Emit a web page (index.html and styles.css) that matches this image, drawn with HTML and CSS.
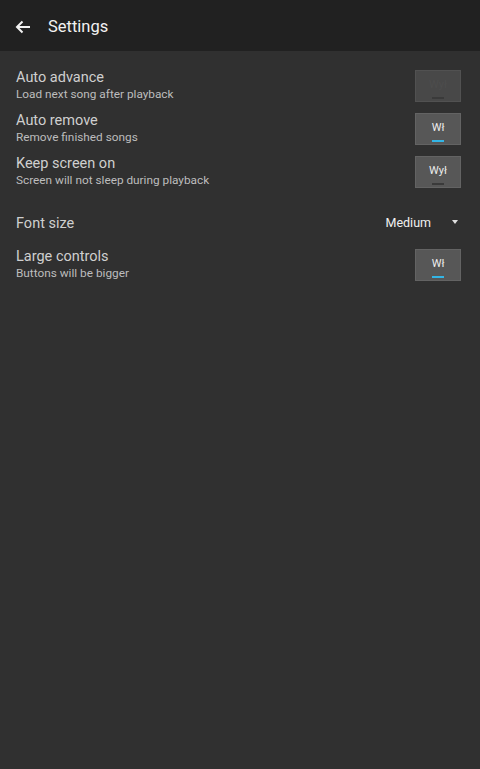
FILE: index.html
```html
<!DOCTYPE html>
<html>
<head>
<meta charset="utf-8">
<link rel="stylesheet" href="styles.css">
</head>
<body>
<header class="appbar">
  <svg class="back" width="16" height="14" viewBox="0 0 16 14"><path d="M15 7H2.5M7.5 1.5L2 7l5.5 5.5" fill="none" stroke="#f2f2f2" stroke-width="2"/></svg>
  <span class="title">Settings</span>
</header>
<main class="list">
  <div class="row">
    <div class="texts"><div class="t">Auto advance</div><div class="s">Load next song after playback</div></div>
    <div class="toggle disabled"><span class="lbl">Wył</span><span class="bar"></span></div>
  </div>
  <div class="row">
    <div class="texts"><div class="t">Auto remove</div><div class="s">Remove finished songs</div></div>
    <div class="toggle on"><span class="lbl">Wł</span><span class="bar"></span></div>
  </div>
  <div class="row">
    <div class="texts"><div class="t">Keep screen on</div><div class="s">Screen will not sleep during playback</div></div>
    <div class="toggle"><span class="lbl">Wył</span><span class="bar"></span></div>
  </div>
  <div class="row font">
    <div class="texts"><div class="t">Font size</div></div>
    <div class="spinner"><span>Medium</span><span class="tri"></span></div>
  </div>
  <div class="row">
    <div class="texts"><div class="t">Large controls</div><div class="s">Buttons will be bigger</div></div>
    <div class="toggle on"><span class="lbl">Wł</span><span class="bar"></span></div>
  </div>
</main>
</body>
</html>
```
FILE: styles.css
```css
html, body { margin: 0; padding: 0; }
body {
  width: 480px; height: 769px;
  background: #303030;
  font-family: Roboto, "Noto Sans", sans-serif;
  overflow: hidden;
}
.appbar {
  box-sizing: border-box;
  height: 51px;
  padding-top: 2px;
  background: #212121;
  display: flex;
  align-items: center;
  padding-left: 15px;
}
.back { display: block; margin-right: 17px; }
.title { color: #f2f2f2; font-size: 16.5px; }
.list { padding: 13px 19px 0 16px; }
.row {
  height: 43px;
  display: flex;
  align-items: center;
  justify-content: space-between;
}
.texts { display: flex; flex-direction: column; }
.t { color: #cfcfcf; font-size: 14.5px; line-height: 18px; }
.s { color: #bdbdbd; font-size: 11.8px; line-height: 15px; }
.row.font { box-sizing: border-box; height: 50px; padding-top: 12px; }
.toggle {
  width: 44px; height: 30px;
  background: #575757;
  border: 1px solid #636363;
  position: relative;
  display: flex;
  justify-content: center;
  align-items: center;
}
.toggle .lbl { color: #ededed; font-size: 11px; margin-top: -2px; }
.toggle .bar {
  position: absolute; left: 16px; bottom: 2px;
  width: 12px; height: 2px; background: #3a3a3a;
}
.toggle.on .bar { background: #33b5e5; }
.toggle.disabled { background: #484848; border-color: #515151; }
.toggle.disabled .lbl { color: #4d4d4d; }
.toggle.disabled .bar { background: #3a3a3a; }
.spinner {
  display: flex; align-items: center;
  color: #f0f0f0; font-size: 12.5px;
  margin-right: 3px;
  margin-bottom: 3px;
}
.tri {
  margin-left: 21px;
  width: 0; height: 0;
  border-left: 3.5px solid transparent;
  border-right: 3.5px solid transparent;
  border-top: 4px solid #e0e0e0;
  margin-top: -1px;
}
```
